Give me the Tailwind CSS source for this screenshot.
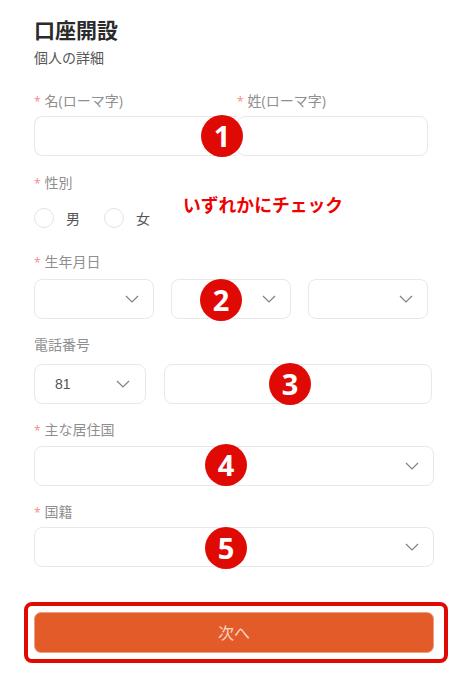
<!DOCTYPE html>
<html lang="ja">
<head>
  <meta charset="UTF-8" />
  <meta name="viewport" content="width=device-width, initial-scale=1.0" />
  <title>口座開設</title>
  <script src="https://cdn.jsdelivr.net/npm/@tailwindcss/browser@4"></script>
</head>
<body class="relative w-[474px] h-[683px] overflow-hidden bg-white font-['Open_Sans','Noto_Sans_CJK_JP',sans-serif] text-[14px] text-[#8f8f8f]">
  <main class="flex flex-col pl-[34px] pt-[16px]">
    <h1 class="h-[28px] leading-[28px] text-[21px] font-bold text-[#2b2b2b]">口座開設</h1>
    <p class="mt-[4px] h-[20px] leading-[20px] text-[14px] text-[#555]">個人の詳細</p>

    <!-- 名前 -->
    <div class="mt-[23px] flex">
      <div class="w-[203px]">
        <label class="block h-[20px] leading-[20px]"><span class="text-[#f78989] text-[12px] mr-[4px]">*</span>名(ローマ字)</label>
      </div>
      <div class="w-[191px]">
        <label class="block h-[20px] leading-[20px]"><span class="text-[#f78989] text-[12px] mr-[4px]">*</span>姓(ローマ字)</label>
      </div>
    </div>
    <div class="mt-[5px] flex">
      <div class="w-[203px] h-[40px] border border-[#e8e8e8] border-r-0 rounded-l-[8px]"></div>
      <div class="w-[191px] h-[40px] border border-[#e8e8e8] rounded-[8px]"></div>
    </div>

    <!-- 性別 -->
    <label class="mt-[17px] block h-[20px] leading-[20px]"><span class="text-[#f78989] text-[12px] mr-[4px]">*</span>性別</label>
    <div class="mt-[15px] flex items-center h-[20px] text-[14px] text-[#555]">
      <span class="w-[20px] h-[20px] rounded-full border border-[#e3e3e8]"></span>
      <span class="ml-[12px]">男</span>
      <span class="ml-[24px] w-[20px] h-[20px] rounded-full border border-[#e3e3e8]"></span>
      <span class="ml-[12px]">女</span>
    </div>

    <!-- 生年月日 -->
    <label class="mt-[24px] block h-[20px] leading-[20px]"><span class="text-[#f78989] text-[12px] mr-[4px]">*</span>生年月日</label>
    <div class="mt-[7px] flex gap-[17px]">
      <div class="w-[120px] h-[40px] border border-[#e8e8e8] rounded-[8px] flex items-center justify-end pr-[14px]">
        <svg class="w-[14px] h-[8px]" viewBox="0 0 14 8" fill="none" stroke="#808080" stroke-width="1.2"><path d="M1 1l6 6 6-6"/></svg>
      </div>
      <div class="w-[120px] h-[40px] border border-[#e8e8e8] rounded-[8px] flex items-center justify-end pr-[14px]">
        <svg class="w-[14px] h-[8px]" viewBox="0 0 14 8" fill="none" stroke="#808080" stroke-width="1.2"><path d="M1 1l6 6 6-6"/></svg>
      </div>
      <div class="w-[120px] h-[40px] border border-[#e8e8e8] rounded-[8px] flex items-center justify-end pr-[14px]">
        <svg class="w-[14px] h-[8px]" viewBox="0 0 14 8" fill="none" stroke="#808080" stroke-width="1.2"><path d="M1 1l6 6 6-6"/></svg>
      </div>
    </div>

    <!-- 電話番号 -->
    <label class="mt-[16px] block h-[20px] leading-[20px]">電話番号</label>
    <div class="mt-[9px] flex gap-[18px]">
      <div class="w-[112px] h-[40px] border border-[#e8e8e8] rounded-[8px] flex items-center justify-between pl-[20px] pr-[15px] text-[#555] font-['Liberation_Sans',sans-serif]">
        81
        <svg class="w-[14px] h-[8px]" viewBox="0 0 14 8" fill="none" stroke="#808080" stroke-width="1.2"><path d="M1 1l6 6 6-6"/></svg>
      </div>
      <div class="w-[268px] h-[40px] border border-[#e8e8e8] rounded-[8px]"></div>
    </div>

    <!-- 主な居住国 -->
    <label class="mt-[16px] block h-[20px] leading-[20px]"><span class="text-[#f78989] text-[12px] mr-[4px]">*</span>主な居住国</label>
    <div class="mt-[6px] w-[400px] h-[40px] border border-[#e8e8e8] rounded-[8px] flex items-center justify-end pr-[14px]">
      <svg class="w-[14px] h-[8px]" viewBox="0 0 14 8" fill="none" stroke="#808080" stroke-width="1.2"><path d="M1 1l6 6 6-6"/></svg>
    </div>

    <!-- 国籍 -->
    <label class="mt-[16px] block h-[20px] leading-[20px]"><span class="text-[#f78989] text-[12px] mr-[4px]">*</span>国籍</label>
    <div class="mt-[5px] w-[400px] h-[40px] border border-[#e8e8e8] rounded-[8px] flex items-center justify-end pr-[14px]">
      <svg class="w-[14px] h-[8px]" viewBox="0 0 14 8" fill="none" stroke="#808080" stroke-width="1.2"><path d="M1 1l6 6 6-6"/></svg>
    </div>

    <button class="mt-[45px] w-[400px] h-[41px] rounded-[7px] bg-[#e35b29] border border-[#eda183] text-[16px] text-[#f8d8c8]">次へ</button>
  </main>

  <!-- annotations over the form -->
  <div class="absolute left-[201px] top-[115px] w-[42px] h-[42px] rounded-full bg-[#e00a05] text-white text-[29px] font-bold flex items-center justify-center">1</div>
  <div class="absolute left-[200px] top-[279px] w-[42px] h-[42px] rounded-full bg-[#e00a05] text-white text-[29px] font-bold flex items-center justify-center">2</div>
  <div class="absolute left-[269px] top-[363px] w-[42px] h-[42px] rounded-full bg-[#e00a05] text-white text-[29px] font-bold flex items-center justify-center">3</div>
  <div class="absolute left-[205px] top-[444px] w-[42px] h-[42px] rounded-full bg-[#e00a05] text-white text-[29px] font-bold flex items-center justify-center">4</div>
  <div class="absolute left-[205px] top-[527px] w-[42px] h-[42px] rounded-full bg-[#e00a05] text-white text-[29px] font-bold flex items-center justify-center">5</div>
  <div class="absolute left-[183px] top-[193px] text-[17.8px] leading-[24px] font-bold text-[#f00000]">いずれかにチェック</div>
  <div class="absolute left-[24px] top-[602px] w-[424px] h-[61px] border-[4px] border-[#e00a05] rounded-[8px]"></div>
</body>
</html>
